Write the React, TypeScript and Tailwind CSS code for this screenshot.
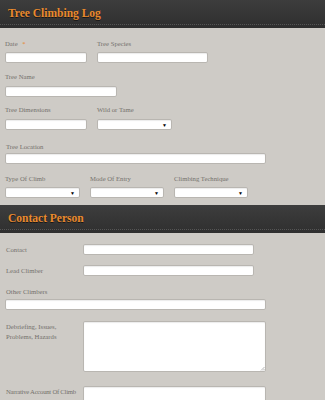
import React from "react"

const serif = "font-['Liberation_Serif',Georgia,serif]"

function Header({ title }: { title: string }) {
  return (
    <div className="relative h-[28px] bg-gradient-to-b from-[#3d3d3d] to-[#2f2f2f] flex items-center pl-[8px]">
      <span className={`${serif} text-[11.5px] font-bold text-[#ea8a2c] leading-none [text-shadow:0_1px_0_rgba(0,0,0,0.6)]`}>{title}</span>
      <div className="absolute left-0 right-0 bottom-[3px] border-b border-dotted border-[#555]" />
    </div>
  )
}

function Label({ children, className = "" }: { children: React.ReactNode; className?: string }) {
  return <div className={`${serif} text-[6.7px] leading-[8px] text-[#74716c] ${className}`}>{children}</div>
}

function Box({ w, h = 11, select = false }: { w: number; h?: number; select?: boolean }) {
  return (
    <div
      className="relative bg-white border border-[#b9b6b1] rounded-[2px] shadow-[inset_0_1px_1px_rgba(0,0,0,0.08)]"
      style={{ width: w, height: h }}
    >
      {select && (
        <span className="absolute right-[4px] top-[2px] text-[5px] leading-[6px] text-black">▼</span>
      )}
    </div>
  )
}

export default function App() {
  return (
    <div className="w-[325px] h-[400px] overflow-hidden bg-[#cecbc6]">
      <Header title="Tree Climbing Log" />

      <div className="pl-[5px]">
        <div className="flex gap-[10px] mt-[12px]">
          <div>
            <Label>
              Date <span className="text-[#e8832a] ml-[3px]">*</span>
            </Label>
            <div className="mt-[4px]"><Box w={82} /></div>
          </div>
          <div>
            <Label>Tree Species</Label>
            <div className="mt-[4px]"><Box w={111} /></div>
          </div>
        </div>

        <Label className="mt-[10px]">Tree Name</Label>
        <div className="mt-[5px]"><Box w={112} /></div>

        <div className="flex gap-[10px] mt-[9px]">
          <div>
            <Label>Tree Dimensions</Label>
            <div className="mt-[5px]"><Box w={82} /></div>
          </div>
          <div>
            <Label>Wild or Tame</Label>
            <div className="mt-[5px]"><Box w={75} select /></div>
          </div>
        </div>

        <Label className="mt-[13px] pl-[1px]">Tree Location</Label>
        <div className="mt-[2px]"><Box w={261} /></div>

        <div className="flex gap-[10px] mt-[11px]">
          <div>
            <Label>Type Of Climb</Label>
            <div className="mt-[4px]"><Box w={75} select /></div>
          </div>
          <div>
            <Label>Mode Of Entry</Label>
            <div className="mt-[4px]"><Box w={74} select /></div>
          </div>
          <div>
            <Label>Climbing Technique</Label>
            <div className="mt-[4px]"><Box w={74} select /></div>
          </div>
        </div>
      </div>

      <div className="mt-[7px]">
        <Header title="Contact Person" />
      </div>

      <div className="pl-[5px]">
        <div className="flex items-center mt-[11px]">
          <Label className="w-[78px] pl-[1px]">Contact</Label>
          <Box w={171} />
        </div>
        <div className="flex items-center mt-[10px]">
          <Label className="w-[78px] pl-[1px]">Lead Climber</Label>
          <Box w={171} />
        </div>

        <Label className="mt-[12px] pl-[1px]">Other Climbers</Label>
        <div className="mt-[3px]"><Box w={261} /></div>

        <div className="flex items-start mt-[11px]">
          <Label className="w-[78px] pl-[1px] pt-[1px] leading-[10px]">
            Debriefing, Issues,
            <br />
            Problems, Hazards
          </Label>
          <div className="relative">
            <Box w={183} h={51} />
            <svg className="absolute right-[1px] bottom-[1px]" width="5" height="5" viewBox="0 0 5 5">
              <path d="M1 4.5 L4.5 1 M3 4.5 L4.5 3" stroke="#999" strokeWidth="0.7" />
            </svg>
          </div>
        </div>

        <div className="flex items-start mt-[14px]">
          <Label className="w-[78px] pl-[1px] pt-[2px] whitespace-nowrap tracking-[-0.25px] text-[6.3px]">Narrative Account Of Climb</Label>
          <Box w={183} h={40} />
        </div>
      </div>
    </div>
  )
}
